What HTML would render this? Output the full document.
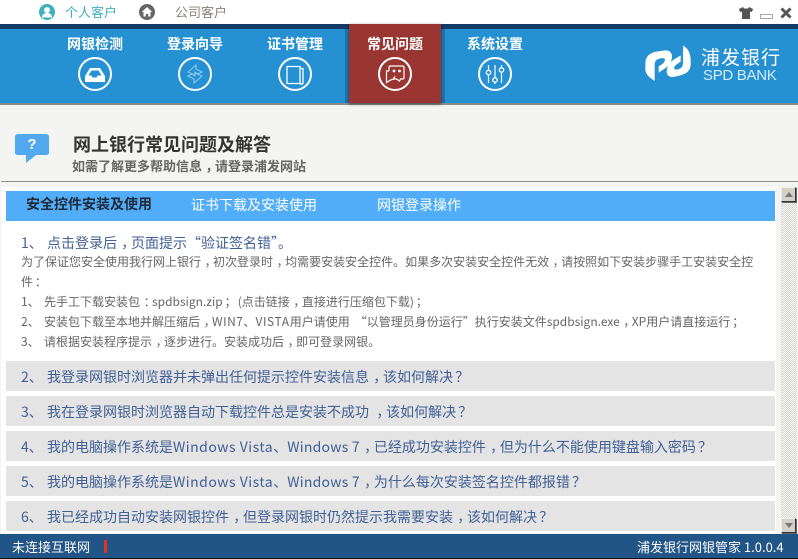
<!DOCTYPE html>
<html lang="zh-CN">
<head>
<meta charset="utf-8">
<title>浦发银行网银管家</title>
<style>
html,body{margin:0;padding:0;}
body{width:798px;height:559px;overflow:hidden;position:relative;background:#f4f4f2;font-family:"Noto Sans CJK SC","Liberation Sans",sans-serif;}
.a{position:absolute;white-space:nowrap;}
.nav{color:#fff;font-size:14px;font-weight:700;top:35px;line-height:18px;}
.row{position:absolute;left:6px;width:769px;height:30px;background:#e4e4e4;}
.q{position:absolute;left:21px;white-space:nowrap;font-size:14px;line-height:20px;color:#3f5f95;}
.q i{font-style:normal;display:inline-block;width:26px;}
.d{position:absolute;left:21px;white-space:nowrap;font-size:12px;line-height:18px;color:#666;}
.d i{font-style:normal;display:inline-block;width:23px;}
u{text-decoration:none;font-family:"WenQuanYi Zen Hei",sans-serif;position:relative;left:.3em;}
u.s{left:.15em;}
svg{position:absolute;display:block;}
</style>
</head>
<body>
<div class="a" style="left:0;top:0;width:798px;height:24px;background:#fff;"></div>
<svg style="left:39px;top:4px" width="16" height="16" viewBox="0 0 16 16"><circle cx="8" cy="8" r="8" fill="#3fb0bc"/><circle cx="8" cy="6" r="3" fill="#fff"/><path d="M3 13.500c0-3 2-4.500 5-4.500s5 1.500 5 4.500z" fill="#fff"/></svg>
<div class="a" style="left:65px;top:3px;font-size:13px;line-height:18px;color:#3fb0bc;">个人客户</div>
<svg style="left:139px;top:4px" width="16" height="16" viewBox="0 0 16 16"><circle cx="8" cy="8" r="8" fill="#666"/><path d="M8 3L2.800 8h1.700v4.500h2.300V10h2.400v2.500h2.300V8h1.700z" fill="#fff"/></svg>
<div class="a" style="left:175px;top:3px;font-size:13px;line-height:18px;color:#8a8178;">公司客户</div>
<svg style="left:739px;top:7px" width="14" height="12" viewBox="0 0 14 12"><path d="M4 0L0 2l1 3 2-.5V12h8V4.500l2 .5 1-3-4-2-1 1.500H5z" fill="#555"/></svg>
<div class="a" style="left:760px;top:14px;width:11px;height:3px;border:1px solid #aaa;background:#fff;"></div>
<svg style="left:780px;top:7px" width="12" height="12" viewBox="0 0 12 12"><path d="M1.500 1.500l9 9M10.500 1.500l-9 9" stroke="#555" stroke-width="3"/></svg>

<div class="a" style="left:0;top:24px;width:798px;height:5px;background:#143a66;"></div>
<div class="a" style="left:0;top:29px;width:798px;height:74px;background:#2591d3;"></div>
<div class="a" style="left:0;top:103px;width:798px;height:2px;background:#8a8a8a;"></div>
<div class="a" style="left:345px;top:29px;width:4px;height:74px;background:#1f76ad;"></div>
<div class="a" style="left:441px;top:29px;width:4px;height:74px;background:#1f76ad;"></div>
<div class="a" style="left:349px;top:24px;width:92px;height:79px;background:#993631;box-shadow:0 1px 3px rgba(0,0,0,.5);"></div>

<div class="a nav" style="left:67px;">网银检测</div>
<div class="a nav" style="left:167px;">登录向导</div>
<div class="a nav" style="left:267px;">证书管理</div>
<div class="a nav" style="left:367px;">常见问题</div>
<div class="a nav" style="left:467px;">系统设置</div>

<svg style="left:78px;top:57px" width="34" height="34" viewBox="0 0 34 34"><circle cx="17" cy="17" r="16" fill="none" stroke="#fff" stroke-width="2"/><path d="M7 19l5-8h10l5 8v6H7z" fill="#fff"/><path d="M10.500 18.500l3-5h7l3 5h-4l-1 2h-4l-1-2z" fill="#2591d3"/></svg>
<svg style="left:178px;top:57px" width="34" height="34" viewBox="0 0 34 34"><circle cx="17" cy="17" r="16" fill="none" stroke="#fff" stroke-width="2"/><path d="M10 15l8-7v4l6 3-4 2-3-2v3zM24 19l-8 7v-4l-6-3 4-2 3 2v-3z" fill="none" stroke="#8ecbec" stroke-width="1"/></svg>
<svg style="left:278px;top:57px" width="34" height="34" viewBox="0 0 34 34"><circle cx="17" cy="17" r="16" fill="none" stroke="#fff" stroke-width="2"/><path d="M9 9.500h13v17H9zM22 11.500h3v15l-3 1" fill="none" stroke="#fff" stroke-width="1.300"/></svg>
<svg style="left:378px;top:57px" width="34" height="34" viewBox="0 0 34 34"><circle cx="17" cy="17" r="16" fill="none" stroke="#fff" stroke-width="2"/><path d="M11 14V10.500Q11 9 12.500 9h12Q26 9 26 10.500v10Q26 22 24.500 22h-2l-1 2-3-2h-3" fill="none" stroke="#fff" stroke-width="1.200"/><path d="M11 14H8.500v11.500l4-2.500 3-1 1.500-3" fill="none" stroke="#fff" stroke-width="1.200"/><circle cx="16" cy="14" r="1.400" fill="#fff"/><circle cx="21.500" cy="14" r="1.400" fill="#fff"/></svg>
<svg style="left:478px;top:57px" width="34" height="34" viewBox="0 0 34 34"><circle cx="17" cy="17" r="16" fill="none" stroke="#fff" stroke-width="2"/><path d="M10.500 8v5.500M10.500 17.500V26M17 8v13M17 25v2M23.500 8v3M23.500 15V26" stroke="#fff" stroke-width="1.200"/><circle cx="10.500" cy="15.500" r="2.200" fill="none" stroke="#fff" stroke-width="1.300"/><circle cx="17" cy="23" r="2.200" fill="none" stroke="#fff" stroke-width="1.300"/><circle cx="23.500" cy="13" r="2.200" fill="none" stroke="#fff" stroke-width="1.300"/></svg>

<svg style="left:640px;top:42px" width="60" height="46" viewBox="0 0 180 138"><g fill="#fff" stroke="#fff" stroke-width="4"><path d="M18 62Q20 36 50 31L75 27Q92 26 94 42Q94 66 70 80L58 88V74Q78 64 77 52Q75 44 62 47Q42 50 42 68V113Q20 100 18 85Z"/><path d="M150 70Q148 92 118 99L100 103Q82 104 82 88Q83 66 106 52L120 44V58Q100 70 100 78Q102 87 115 84Q130 80 131 65V14Q148 25 150 50Z"/></g></svg>
<div class="a" style="left:701px;top:44px;font-size:19px;line-height:26px;color:#fff;letter-spacing:1px;">浦发银行</div>
<div class="a" style="left:703px;top:67px;font-family:'Liberation Sans',sans-serif;font-size:15px;line-height:17px;color:#d5ebf8;letter-spacing:-.3px;">SPD BANK</div>

<svg style="left:15px;top:134px" width="35" height="29" viewBox="0 0 35 29"><path d="M3 0h28q3 0 3 3v15q0 3-3 3H21l-10 8v-8H3q-3 0-3-3V3q0-3 3-3z" fill="#53a9f0"/><text x="17" y="15" text-anchor="middle" font-size="15" font-weight="700" fill="#fff" font-family="Liberation Sans">?</text></svg>
<div class="a" style="left:73px;top:132px;font-size:18px;line-height:24px;font-weight:700;color:#333;">网上银行常见问题及解答</div>
<div class="a" style="left:72px;top:157px;font-size:13px;line-height:18px;font-weight:700;color:#666;">如需了解更多帮助信息<u>，</u>请登录浦发网站</div>
<div class="a" style="left:1px;top:181px;width:797px;height:1px;background:#8c8c88;"></div>

<div class="a" style="left:1px;top:187px;width:775px;height:346px;background:#fff;"></div>
<div class="a" style="left:6px;top:191px;width:769px;height:30px;background:#52adf8;"></div>
<div class="a" style="left:26px;top:195px;font-size:14px;line-height:18px;font-weight:700;color:#1f2a38;">安全控件安装及使用</div>
<div class="a" style="left:191px;top:196px;font-size:14px;line-height:18px;color:#fff;">证书下载及安装使用</div>
<div class="a" style="left:377px;top:196px;font-size:14px;line-height:18px;color:#fff;">网银登录操作</div>

<div class="q" style="top:233px;"><i>1、</i>点击登录后<u>，</u>页面提示“验证签名错”。</div>
<div class="d" style="top:253px;">为了保证您安全使用我行网上银行<u>，</u>初次登录时<u>，</u>均需要安装安全控件。如果多次安装安全控件无效<u>，</u>请按照如下安装步骤手工安装安全控</div>
<div class="d" style="top:273px;">件<u class="s">：</u></div>
<div class="d" style="top:293px;"><i>1、</i>先手工下载安装包<u>：</u>spdbsign.zip<u class="s" style="margin-right:3px">；</u>(点击链接<u>，</u>直接进行压缩包下载)<u class="s">；</u></div>
<div class="d" style="top:313px;"><i>2、</i>安装包下载至本地并解压缩后<u>，</u><span style="letter-spacing:.5px">WIN7</span>、<span style="letter-spacing:.6px">VISTA</span>用户请使用<span style="margin-left:5px">“</span>以管理员身份运行”执行安装文件spdbsign.exe<u>，</u>XP用户请直接运行<u class="s">；</u></div>
<div class="d" style="top:333px;"><i>3、</i>请根据安装程序提示<u>，</u>逐步进行。安装成功后<u>，</u>即可登录网银。</div>

<div class="row" style="top:361px;"></div>
<div class="q" style="top:367px;"><i>2、</i>我登录网银时浏览器并未弹出任何提示控件安装信息<u>，</u>该如何解决<u class="s">？</u></div>
<div class="row" style="top:396px;"></div>
<div class="q" style="top:402px;"><i>3、</i>我在登录网银时浏览器自动下载控件总是安装不成功 <u>，</u>该如何解决<u class="s">？</u></div>
<div class="row" style="top:431px;"></div>
<div class="q" style="top:437px;"><i>4、</i>我的电脑操作系统是<span style="letter-spacing:.5px">Windows Vista</span>、<span style="letter-spacing:.25px">Windows 7</span><u>，</u>已经成功安装控件<u>，</u>但为什么不能使用键盘输入密码<u class="s">？</u></div>
<div class="row" style="top:466px;"></div>
<div class="q" style="top:472px;"><i>5、</i>我的电脑操作系统是<span style="letter-spacing:.5px">Windows Vista</span>、<span style="letter-spacing:.25px">Windows 7</span><u>，</u>为什么每次安装签名控件都报错<u class="s">？</u></div>
<div class="row" style="top:501px;"></div>
<div class="q" style="top:507px;"><i>6、</i>我已经成功自动安装网银控件<u>，</u>但登录网银时仍然提示我需要安装<u>，</u>该如何解决<u class="s">？</u></div>

<div class="a" style="left:781px;top:187px;width:16px;height:346px;background:repeating-conic-gradient(#d4d0c8 0 25%,#fff 0 50%) 0 0/2px 2px;"></div>
<div class="a" style="left:781px;top:187px;width:13px;height:13px;background:#d4d0c8;border:1px solid;border-color:#eee #333 #333 #eee;box-shadow:1px 1px 0 #666;"></div>
<svg style="left:784px;top:192px" width="10" height="6" viewBox="0 0 10 6"><path d="M5 0l4 5H1z" fill="#777"/></svg>
<div class="a" style="left:781px;top:518px;width:13px;height:13px;background:#d4d0c8;border:1px solid;border-color:#eee #333 #333 #eee;box-shadow:1px 1px 0 #666;"></div>
<svg style="left:784px;top:523px" width="10" height="6" viewBox="0 0 10 6"><path d="M1 0h8L5 5z" fill="#777"/></svg>

<div class="a" style="left:0;top:534px;width:798px;height:24px;background:#215487;"></div>
<div class="a" style="left:0;top:558px;width:798px;height:1px;background:#111;"></div>
<div class="a" style="left:12px;top:538px;font-size:13px;line-height:18px;color:#fff;">未连接互联网</div>
<div class="a" style="left:104px;top:540px;width:3px;height:13px;background:#e8321f;"></div>
<div class="a" style="left:637px;top:538px;font-size:13px;line-height:18px;color:#fff;">浦发银行网银管家 1.0.0.4</div>
</body>
</html>
